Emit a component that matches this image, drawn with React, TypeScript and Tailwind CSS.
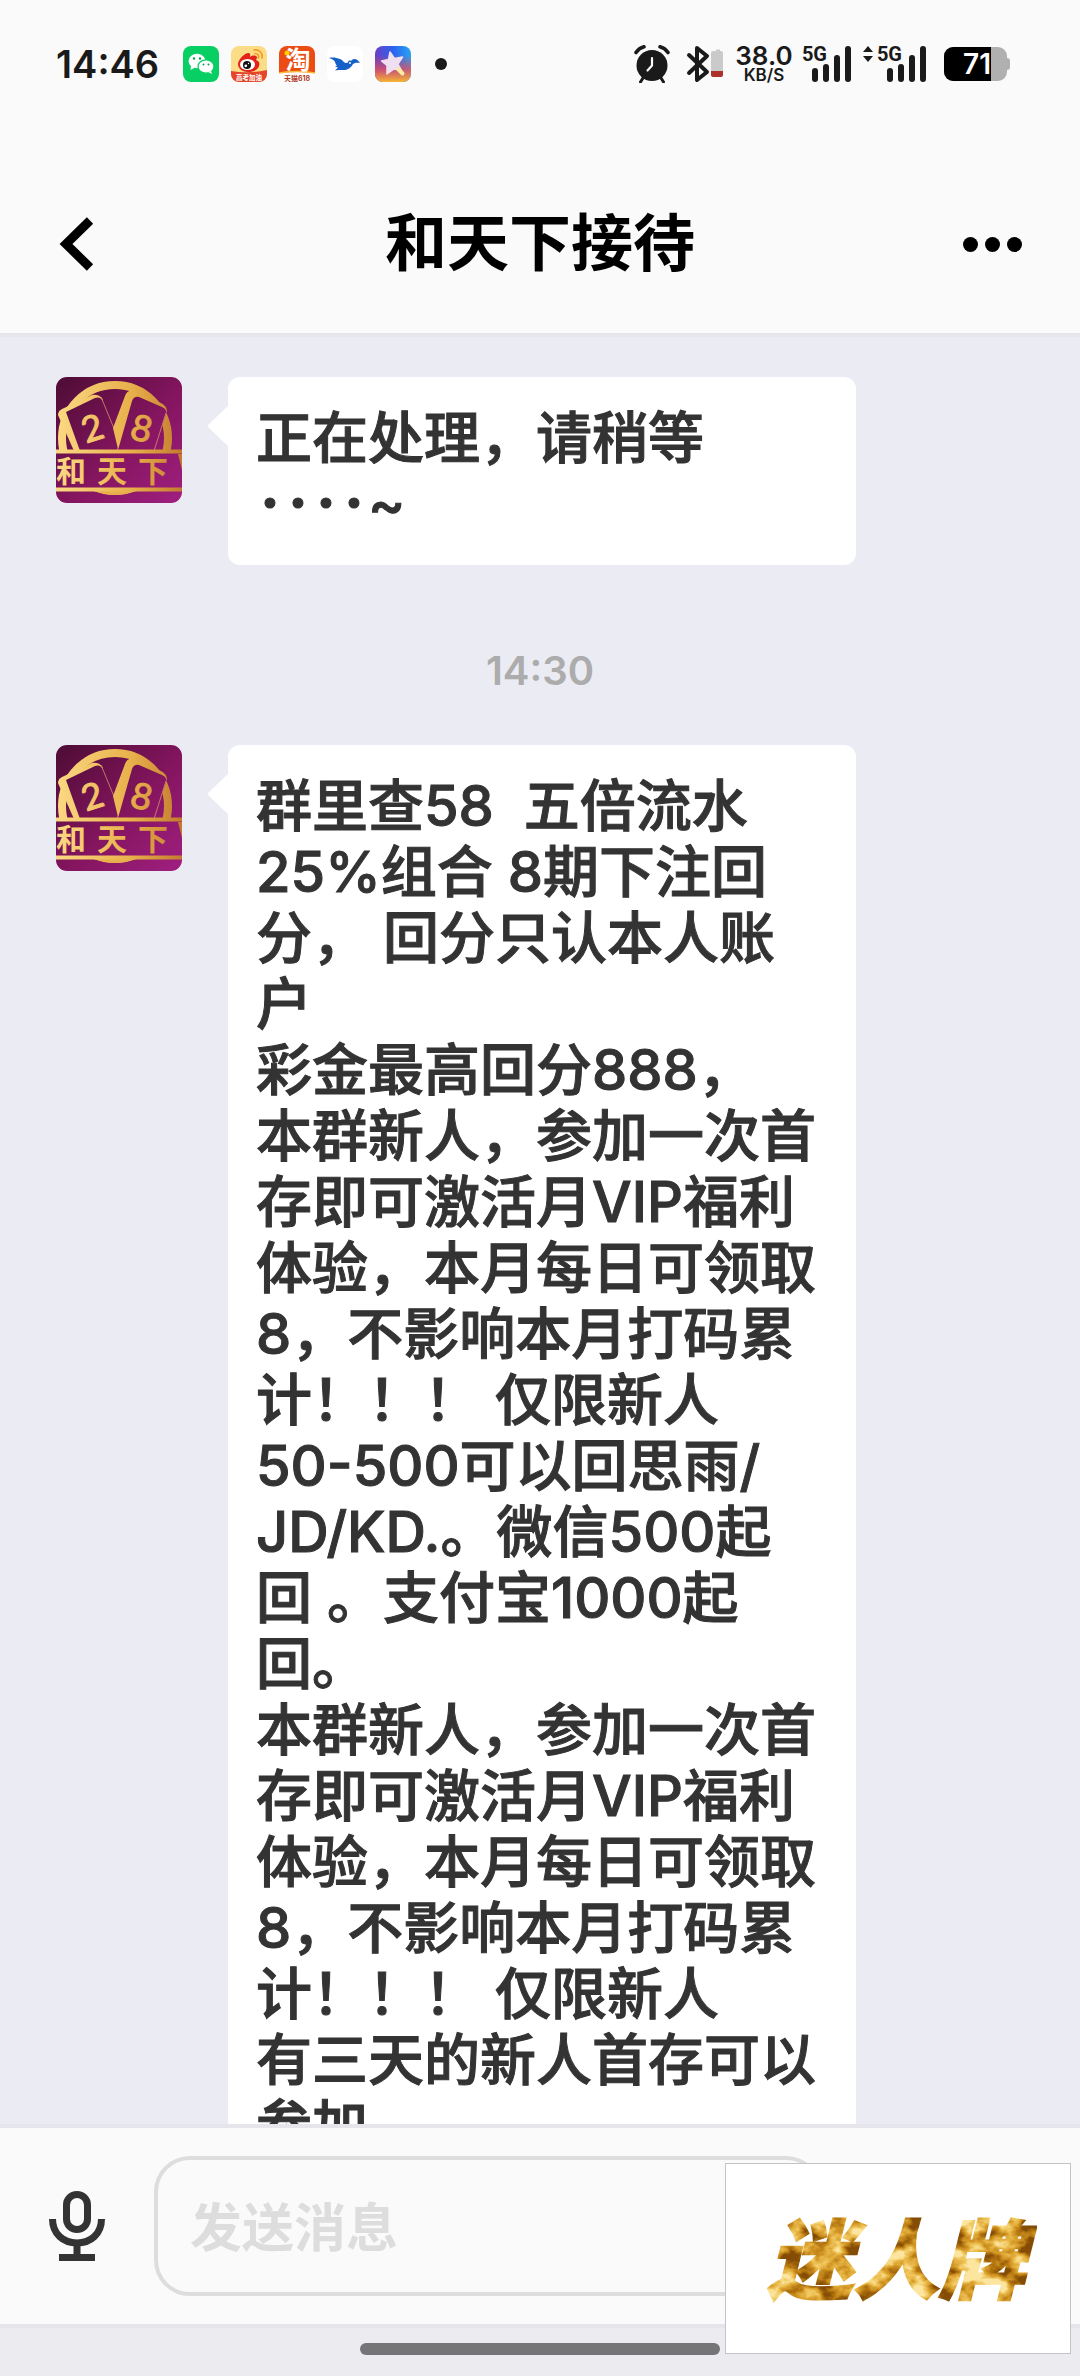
import { useState } from "react"

type Message = {
  id: number
  time?: string
  text: string
}

const VIP_OFFER = `本群新人，参加一次首
存即可激活月VIP福利
体验，本月每日可领取
8，不影响本月打码累
计！！！ 仅限新人`

const messages: Message[] = [
  { id: 1, text: "正在处理，请稍等\n････~" },
  {
    id: 2,
    time: "14:30",
    text: `群里查58  五倍流水
25%组合 8期下注回
分， 回分只认本人账
户
彩金最高回分888，
${VIP_OFFER}
50-500可以回思雨/
JD/KD.。微信500起
回 。支付宝1000起
回。
${VIP_OFFER}
有三天的新人首存可以
参加`,
  },
]

function WeChatIcon() {
  return (
    <svg viewBox="0 0 36 36" className="size-9">
      <rect width="36" height="36" rx="8" fill="#07cf63" />
      <ellipse cx="14" cy="15" rx="8.5" ry="7.2" fill="#fff" />
      <path d="M8 19.5 7.5 24l4.5-2.5z" fill="#fff" />
      <ellipse cx="23" cy="20.5" rx="8" ry="6.7" fill="#fff" stroke="#07cf63" strokeWidth="1.2" />
      <path d="m28 25 1 3-4-2z" fill="#fff" />
      <g fill="#07a050">
        <circle cx="11" cy="12.5" r="1.2" />
        <circle cx="17" cy="12.5" r="1.2" />
        <circle cx="20.5" cy="18.5" r="1" />
        <circle cx="25.5" cy="18.5" r="1" />
      </g>
    </svg>
  )
}

function WeiboIcon() {
  return (
    <svg viewBox="0 0 36 36" className="size-9">
      <defs>
        <clipPath id="weibo-clip">
          <rect width="36" height="36" rx="8" />
        </clipPath>
      </defs>
      <g clipPath="url(#weibo-clip)">
        <rect width="36" height="36" fill="#fbdd87" />
        <path d="M0 25q18 3 36-1v12H0z" fill="#e5452a" />
        <path d="M7 18c0-5 8-12 11-11 2 1 1 3 1 4 3-2 7-2 7 1l-1 2c3 1 4 3 3 6-1 4-6 6-11 6S7 23 7 18z" fill="#e2231a" />
        <ellipse cx="16.5" cy="18.5" rx="7.5" ry="5.5" fill="#fff" />
        <circle cx="16" cy="19" r="4" fill="#111" />
        <circle cx="14.8" cy="19.8" r="1.4" fill="#fff" />
        <circle cx="17.5" cy="17.5" r=".7" fill="#fff" />
        <path d="M23 4c5-1 9 3 8 8M24 7.500c3 0 4 2 3.500 4.500" fill="none" stroke="#f59a23" strokeWidth="1.700" strokeLinecap="round" />
        <text x="18" y="34" textAnchor="middle" fontSize="6.5" fontWeight="700" fill="#fff">高考加油</text>
      </g>
    </svg>
  )
}

function TaobaoIcon() {
  return (
    <svg viewBox="0 0 36 36" className="size-9">
      <defs>
        <clipPath id="taobao-clip">
          <rect width="36" height="36" rx="8" />
        </clipPath>
      </defs>
      <g clipPath="url(#taobao-clip)">
        <rect width="36" height="36" fill="#fff" />
        <path d="M0 0h36v27q-18-2-36 0z" fill="#ea4c13" />
        <path d="M0 27q18-3 36 0" fill="none" stroke="#fbb93c" strokeWidth="1.5" />
        <circle cx="8" cy="7" r="2.5" fill="#ffd100" />
        <text x="19" y="22.5" textAnchor="middle" fontSize="25" fontWeight="700" fill="#fff">淘</text>
        <text x="18" y="34.5" textAnchor="middle" fontSize="7" fontWeight="700" fill="#b3402a">天猫618</text>
      </g>
    </svg>
  )
}

function BirdIcon() {
  return (
    <svg viewBox="0 0 36 36" className="size-9">
      <rect width="36" height="36" rx="8" fill="#fff" />
      <path
        d="M2 12c4-1 8 0 11 1 3 1 4 4 6 4l2-.5c0-2 2-2.500 3-1.500 2-3 6-3 9 2-3-.6-5-.4-7 1-2 4-6 6.500-11 6-3 0-5-.4-7 .6l3-3-3-1 2-1c-2-1-1-3-3-5-1.500-1.500-3-2-5-2.600z"
        fill="#1560c8"
      />
      <circle cx="23" cy="17" r="1" fill="#fff" />
    </svg>
  )
}

function StarIcon() {
  return (
    <svg viewBox="0 0 36 36" className="size-9">
      <defs>
        <linearGradient id="star-base" x1="0" y1="0" x2="1" y2="0">
          <stop offset="0" stopColor="#6a3fc4" />
          <stop offset=".5" stopColor="#2c62f0" />
          <stop offset="1" stopColor="#27a4f3" />
        </linearGradient>
        <linearGradient id="star-warm" x1="0" y1="0" x2="0" y2="1">
          <stop offset=".25" stopColor="#e0405a" stopOpacity="0" />
          <stop offset=".65" stopColor="#e8505a" stopOpacity=".8" />
          <stop offset="1" stopColor="#f7b733" />
        </linearGradient>
      </defs>
      <rect width="36" height="36" rx="8" fill="url(#star-base)" />
      <rect width="36" height="36" rx="8" fill="url(#star-warm)" />
      <path
        d="m15 6 4.500 6.500 8-1.500-4.500 7 3.500 6.500-7.500-1.500-7 5v-8.500L6.500 15l7-1.500z"
        fill="#efdff0"
        stroke="#efdff0"
        strokeWidth="1.5"
        strokeLinejoin="round"
      />
      <path d="m23.500 23.500 4 4" stroke="#ffe9a0" strokeWidth="4" strokeLinecap="round" />
    </svg>
  )
}

function AlarmIcon() {
  return (
    <svg viewBox="0 0 36 38" className="h-[38px] w-9" fill="none" stroke="#1a1a1a" strokeLinecap="round">
      <path d="M2 7.500Q5 3 10 1.800M34 7.500Q31 3 26 1.800" strokeWidth="3.6" />
      <path d="m9 33-2.500 4M27 33l2.500 4" strokeWidth="3" />
      <circle cx="18" cy="20.5" r="15.5" fill="#1a1a1a" stroke="none" />
      <path d="M18 13v7.500l-4.500 5" stroke="#fafafa" strokeWidth="2.2" strokeLinejoin="round" />
    </svg>
  )
}

function BluetoothIcon() {
  return (
    <svg viewBox="0 0 38 38" className="size-[38px]" fill="none">
      <path d="m3 10 18 17-10 8V3l10 8L3 28" stroke="#1a1a1a" strokeWidth="4" strokeLinejoin="round" strokeLinecap="round" />
      <path d="M28 6h2V4.500h4V6h1a2 2 0 0 1 2 2v18H25V8a2 2 0 0 1 2-2z" fill="#cacaca" />
      <path d="M25 26h12v4a2 2 0 0 1-2 2h-8a2 2 0 0 1-2-2z" fill="#ad302b" />
    </svg>
  )
}

function Signal({ active }: { active?: boolean }) {
  return (
    <div className="relative flex h-9 items-end gap-[5px] text-[#1a1a1a]">
      <div className="absolute top-0 right-6 flex items-center gap-1">
        {active && (
          <svg viewBox="0 0 10 16" className="h-4 w-[10px]" fill="#1a1a1a">
            <path d="m5 0 5 6H0zM5 16l5-6H0z" />
          </svg>
        )}
        <span className="font-[Roboto] text-[20px] leading-4 font-bold">5G</span>
      </div>
      <span className="h-[14px] w-[6px] rounded-sm bg-[#1a1a1a]" />
      <span className="h-[18px] w-[6px] rounded-sm bg-[#1a1a1a]" />
      <span className="h-[27px] w-[6px] rounded-sm bg-[#1a1a1a]" />
      <span className="h-9 w-[6px] rounded-sm bg-[#1a1a1a]" />
    </div>
  )
}

function StatusBar() {
  return (
    <div className="flex h-32 items-center justify-between pr-[70px] pl-14">
      <div className="flex items-center gap-3">
        <span className="mr-3 text-[38px] leading-none font-semibold text-[#1a1a1a]">14:46</span>
        <WeChatIcon />
        <WeiboIcon />
        <TaobaoIcon />
        <BirdIcon />
        <StarIcon />
        <span className="ml-3 size-3 rounded-full bg-[#1a1a1a]" />
      </div>
      <div className="flex items-center">
        <AlarmIcon />
        <span className="ml-4">
          <BluetoothIcon />
        </span>
        <div className="ml-3 flex w-14 flex-col items-center font-semibold text-[#1a1a1a]">
          <span className="text-[26px] leading-[22px]">38.0</span>
          <span className="text-[17px] leading-4">KB/S</span>
        </div>
        <div className="ml-5">
          <Signal />
        </div>
        <div className="ml-9">
          <Signal active />
        </div>
        <div className="ml-[18px] flex items-center">
          <div className="flex h-[34px] w-[63px] overflow-hidden rounded-[9px] bg-[#b0b0b0]">
            <div className="flex w-[47px] items-center justify-end bg-black text-[28px] leading-none font-semibold text-white">71</div>
          </div>
          <span className="h-3 w-[3px] rounded-r-sm bg-[#b0b0b0]" />
        </div>
      </div>
    </div>
  )
}

function Header() {
  return (
    <header className="border-b-4 border-[#e5e5eb] bg-[#fafafa]">
      <StatusBar />
      <div className="grid h-[205px] grid-cols-[120px_1fr_120px] items-start pt-[84px]">
        <button aria-label="返回" className="flex h-16 items-center pl-[58px]">
          <svg viewBox="0 0 36 54" className="h-[54px] w-9" fill="none">
            <path d="M32 3.500 8 27l24 23.500" stroke="#000" strokeWidth="9" />
          </svg>
        </button>
        <h1 className="text-center text-[62px] leading-16 font-bold text-black">和天下接待</h1>
        <button aria-label="更多" className="flex h-16 items-center justify-end gap-[7px] pr-[58px]">
          <span className="size-[15px] rounded-full bg-black" />
          <span className="size-[15px] rounded-full bg-black" />
          <span className="size-[15px] rounded-full bg-black" />
        </button>
      </div>
    </header>
  )
}

function Avatar() {
  return (
    <svg viewBox="0 0 126 126" className="size-[126px] shrink-0 rounded-[11px]">
      <defs>
        <linearGradient id="plum" gradientUnits="userSpaceOnUse" x1="0" y1="0" x2="126" y2="126">
          <stop offset="0" stopColor="#4d0c34" />
          <stop offset=".55" stopColor="#84155f" />
          <stop offset="1" stopColor="#a01f80" />
        </linearGradient>
        <linearGradient id="gold" gradientUnits="userSpaceOnUse" x1="0" y1="0" x2="126" y2="0">
          <stop offset="0" stopColor="#fbd983" />
          <stop offset=".6" stopColor="#e8b04a" />
          <stop offset="1" stopColor="#c47a30" />
        </linearGradient>
      </defs>
      <rect width="126" height="126" fill="url(#plum)" />
      <circle cx="59" cy="61" r="53" fill="none" stroke="url(#gold)" strokeWidth="8" />
      <path d="M2 38q0-4 4-6l30-14q8-1 11 5L30 74H18z" fill="url(#gold)" />
      <path d="m10 35 29-14q5-2 8 3l17 41-3 9H24z" fill="url(#plum)" />
      <path d="m45 20 19 46-3 8" fill="none" stroke="#d98f6a" strokeWidth=".8" />
      <path d="m57 51 12-32q2-6 8-5l28 12q6 3 6 9l-49 37z" fill="url(#gold)" />
      <path d="m62 73 14-49q2-5 7-4l23 10q5 2 4 7L98 74z" fill="url(#plum)" />
      <path d="M110 36 98 74" stroke="#d98f6a" strokeWidth=".8" />
      <g fill="url(#gold)" stroke="url(#gold)" fontFamily="Lato" fontSize="36">
        <text x="26" y="64" transform="rotate(-18 36 52)">2</text>
        <text x="75" y="64" transform="rotate(14 85 52)">8</text>
      </g>
      <path d="M0 73h126v41H0z" fill="url(#plum)" />
      <path d="M0 72.500h126v4H0zM0 110.500h126v4H0z" fill="url(#gold)" />
      <path d="M40 114.500h38q-19 7-38 0z" fill="#e8b04a" />
      <path d="m122 77 4 16V77z" fill="#c47a30" />
      <g fill="url(#gold)" fontSize="30" fontWeight="700">
        <text x="0" y="105">和</text>
        <text x="41" y="105">天</text>
        <text x="82" y="105">下</text>
      </g>
    </svg>
  )
}

function MessageRow({ message }: { message: Message }) {
  return (
    <li>
      {message.time && (
        <time className="mb-[42px] block text-center text-[40px] leading-16 font-semibold text-[#acacac]">
          {message.time}
        </time>
      )}
      <div className="flex items-start px-14">
        <Avatar />
        <svg viewBox="0 0 20 40" className="mt-[29px] ml-[26px] h-10 w-5 shrink-0" fill="#fff">
          <path d="M20 0v40L1 22q-2-2 0-4z" />
        </svg>
        <p className="w-[628px] rounded-xl bg-white p-7 text-[56px] leading-[66px] font-medium whitespace-pre-wrap text-[#333] [-webkit-text-stroke:1px_#333]">
          {message.text}
        </p>
      </div>
    </li>
  )
}

function Composer() {
  const [draft, setDraft] = useState("")

  return (
    <form className="flex items-center border-y-4 border-[#e5e5eb] bg-[#fafafa] py-7" onSubmit={(e) => e.preventDefault()}>
      <button type="button" aria-label="语音" className="flex w-[154px] justify-center">
        <svg viewBox="0 0 56 70" className="h-[70px] w-14" fill="none" stroke="#333" strokeWidth="7">
          <rect x="17.5" y="3.5" width="21" height="35" rx="10.5" />
          <path d="M3.500 28c0 15 11 24 24.500 24s24.500-9 24.500-24M28 52v12M10 66.500h36" />
        </svg>
      </button>
      <input
        value={draft}
        onChange={(e) => setDraft(e.target.value)}
        placeholder="发送消息"
        aria-label="发送消息"
        className="h-[140px] min-w-0 flex-1 rounded-[36px] border-4 border-[#ddd] bg-transparent px-8 pt-1 text-[52px] font-bold text-[#333] outline-none placeholder:text-[#ddd]"
      />
      <div className="w-[258px]" />
    </form>
  )
}

function FloatingCard() {
  return (
    <aside className="absolute right-[9px] bottom-[22px] flex h-[191px] w-[346px] items-center justify-center border border-[#c3c4c8] bg-white">
      <svg viewBox="0 0 280 100" className="h-[100px] w-[280px]">
        <defs>
          {/* mottled gold leaf, clipped to the lettering */}
          <filter id="foil" x="0" y="0" width="1" height="1" colorInterpolationFilters="sRGB">
            <feTurbulence type="fractalNoise" baseFrequency=".035 .05" numOctaves="4" seed="7" />
            <feColorMatrix values="2.600 0 0 0 -.8  2.600 0 0 0 -.8  2.600 0 0 0 -.8  0 0 0 0 1" />
            <feComponentTransfer>
              <feFuncR type="table" tableValues=".52 .7 .84 .93 .99" />
              <feFuncG type="table" tableValues=".3 .46 .61 .75 .9" />
              <feFuncB type="table" tableValues=".02 .06 .16 .32 .62" />
            </feComponentTransfer>
            <feComposite in2="SourceGraphic" operator="in" />
          </filter>
        </defs>
        <text x="138" y="83" textAnchor="middle" fontSize="86" fontWeight="900" fontStyle="italic" fill="#c98a1c" stroke="#c98a1c" strokeWidth="2" filter="url(#foil)">
          迷人牌
        </text>
      </svg>
    </aside>
  )
}

export default function App() {
  return (
    <div
      lang="zh-CN"
      className="relative flex h-screen flex-col bg-[#ebebf4] font-[Inter,'Noto_Sans_CJK_SC',sans-serif]"
    >
      <Header />
      <main className="min-h-0 flex-1 overflow-y-auto pt-10 [scrollbar-width:none]">
        <ul className="flex flex-col gap-[74px]">
          {messages.map((message) => (
            <MessageRow key={message.id} message={message} />
          ))}
        </ul>
      </main>
      <Composer />
      <div className="flex h-12 shrink-0 justify-center bg-[#ebebf0] pt-[15px]">
        <span className="h-3 w-1/3 rounded-full bg-[#757577]" />
      </div>
      <FloatingCard />
    </div>
  )
}
